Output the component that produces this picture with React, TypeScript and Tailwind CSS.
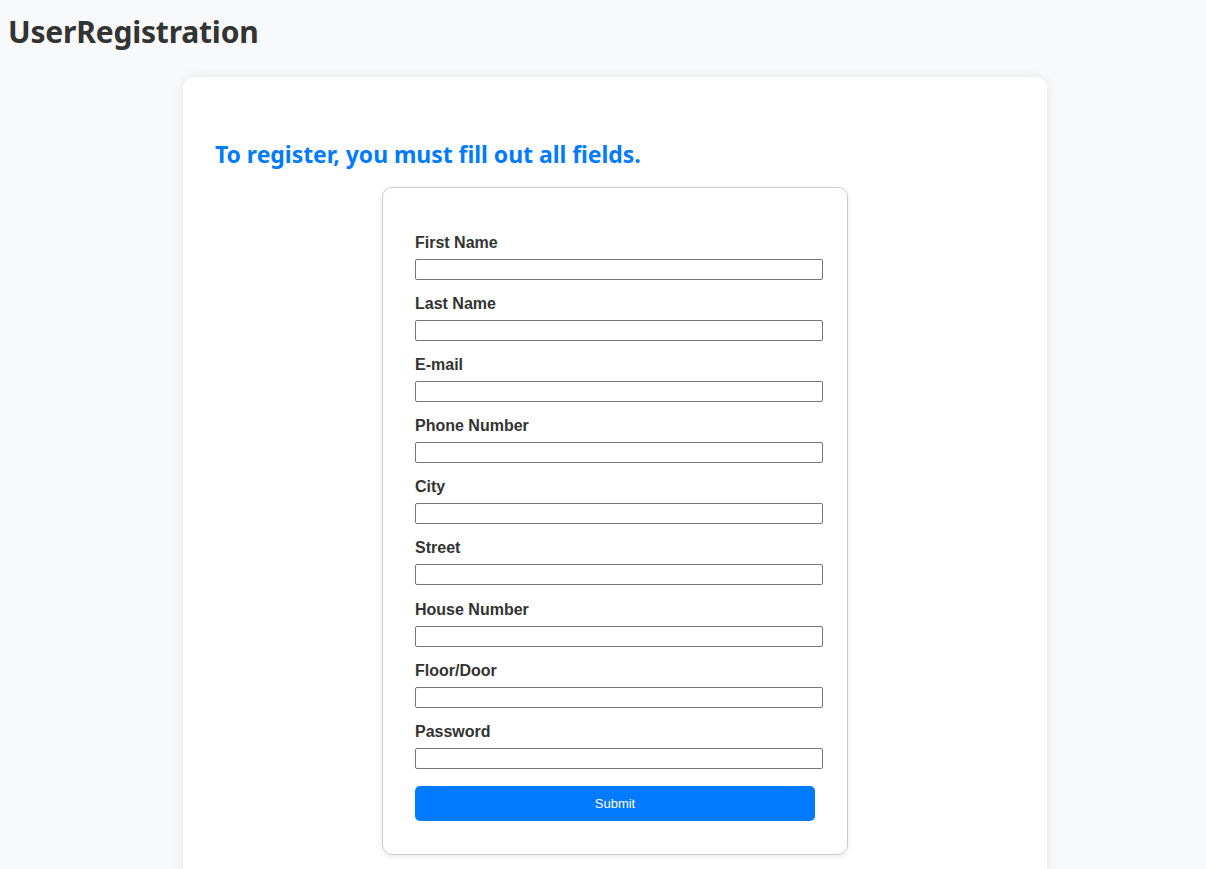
import React from 'react';

const fields = [
  { id: 'firstName', label: 'First Name', type: 'text' },
  { id: 'lastName', label: 'Last Name', type: 'text' },
  { id: 'email', label: 'E-mail', type: 'email' },
  { id: 'phone', label: 'Phone Number', type: 'tel' },
  { id: 'city', label: 'City', type: 'text' },
  { id: 'street', label: 'Street', type: 'text' },
  { id: 'houseNumber', label: 'House Number', type: 'text' },
  { id: 'floorDoor', label: 'Floor/Door', type: 'text' },
  { id: 'password', label: 'Password', type: 'password' },
];

export default function App() {
  return (
    <div className="min-h-screen bg-[#f8f9fa] text-[#333] pl-2 overflow-hidden font-['Noto_Sans',sans-serif]">
      <h1 className="text-[30px] font-bold leading-[40px] pt-[12px] tracking-[-0.2px]">UserRegistration</h1>

      <div className="mt-[25px] ml-[175px]">
        <div className="w-[864px] bg-white rounded-xl shadow-[0_0_12px_rgba(0,0,0,0.08)] px-8 pt-[62px] pb-10">
          <h2 className="text-[23px] font-bold leading-[30px] text-[#007bff] mb-[18px] tracking-[-0.05px]">
            To register, you must fill out all fields.
          </h2>

          <form
            className="w-[466px] mx-auto border border-[#ccc] rounded-[10px] shadow-[0_2px_6px_rgba(0,0,0,0.08)] px-8 pt-[46px] pb-[33px] font-['Liberation_Sans',Arial,sans-serif]"
            onSubmit={(e) => e.preventDefault()}
          >
            {fields.map((f) => (
              <div key={f.id} className="mb-[15.1px]">
                <label htmlFor={f.id} className="block text-base font-bold leading-[18px] mb-[7px]">
                  {f.label}
                </label>
                <input
                  id={f.id}
                  type={f.type}
                  className="block w-[408px] h-[21px] border border-[#767676] rounded-[2px] bg-white px-1 text-[13px]"
                />
              </div>
            ))}
            <button
              type="submit"
              className="block w-[400px] h-[35px] mt-[17px] bg-[#007bff] text-white text-[13px] rounded-[5px]"
            >
              Submit
            </button>
          </form>
        </div>
      </div>
    </div>
  );
}
